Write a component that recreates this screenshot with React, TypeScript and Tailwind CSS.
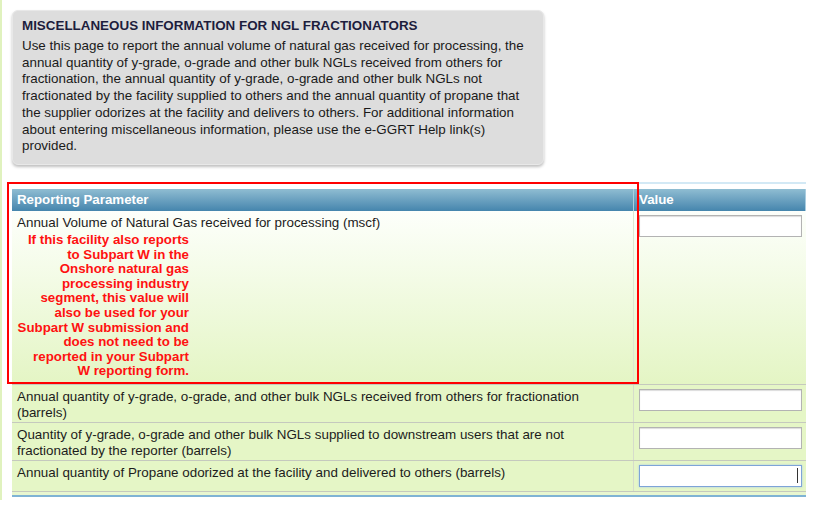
import React from 'react';

const rows = [
  {
    label: 'Annual quantity of y-grade, o-grade, and other bulk NGLs received from others for fractionation (barrels)',
    height: 'h-[38px]',
  },
  {
    label: 'Quantity of y-grade, o-grade and other bulk NGLs supplied to downstream users that are not fractionated by the reporter (barrels)',
    height: 'h-[38px]',
  },
  {
    label: 'Annual quantity of Propane odorized at the facility and delivered to others (barrels)',
    height: 'h-[31px]',
    focused: true,
  },
];

function ValueInput({ focused }: { focused?: boolean }) {
  return (
    <div className="relative ml-[5px] mt-[3px] w-[163px] h-[22px]">
      <input
        readOnly
        className={`w-full h-full bg-white outline-none ${
          focused
            ? 'border border-[#7ea4d8] shadow-[0_0_2px_#a9c6ee]'
            : 'border border-[#b3b3b3] shadow-[inset_0_1px_1px_#dcdcdc]'
        }`}
      />
      {focused && <span className="absolute right-[4px] top-[4px] w-px h-[15px] bg-[#333]"></span>}
    </div>
  );
}

export default function App() {
  return (
    <div className="relative w-[816px] h-[508px] bg-white font-['Liberation_Sans',Arial,sans-serif] text-[#1c1c1c] overflow-hidden">
      <div className="h-[500px] border-l-2 border-[#e0f2be] pt-[10px] pl-[10px] pr-[10px]">
        {/* Info box */}
        <div className="w-[532px] h-[155px] rounded-[6px] bg-[#dddddd] border border-[#e8e8e8] shadow-[0_2px_3px_rgba(0,0,0,0.25)] pl-[9px] pr-[12px] pt-[6px]">
          <h2 className="font-bold text-[13.4px] leading-[18px] text-[#1d1d3d] uppercase">
            Miscellaneous Information for NGL Fractionators
          </h2>
          <p className="mt-[3px] text-[13.4px] leading-[16.7px] text-[#1a1a1a]">
            Use this page to report the annual volume of natural gas received for processing, the annual quantity of
            y-grade, o-grade and other bulk NGLs received from others for fractionation, the annual quantity of y-grade,
            o-grade and other bulk NGLs not fractionated by the facility supplied to others and the annual quantity of
            propane that the supplier odorizes at the facility and delivers to others. For additional information about
            entering miscellaneous information, please use the e-GGRT Help link(s) provided.
          </p>
        </div>

        {/* Table */}
        <div className="mt-[17px] w-[794px] border-t-2 border-[#d3e9f5] pt-[5px]">
          <div className="flex h-[22px] bg-gradient-to-b from-[#8fbdd2] to-[#4585ad] text-white font-bold text-[13.3px] leading-[22px]">
            <div className="w-[622px] pl-[5px] border-r border-[#a9cde0]">Reporting Parameter</div>
            <div className="flex-1 pl-[5px] border-r border-[#a9cde0]">Value</div>
          </div>

          <div className="flex h-[174px] bg-gradient-to-b from-[#fdfffb] to-[#e4f5c4] border-b border-[#c5c9be]">
            <div className="w-[622px] pl-[5px] pt-[4px] border-r border-[#dfe6d3]">
              <div className="text-[13.4px] leading-[16px]">Annual Volume of Natural Gas received for processing (mscf)</div>
              <div className="w-[172px] text-right font-bold text-[13.3px] leading-[14.6px] text-[#ff1111] mt-[2px]">
                If this facility also reports to Subpart W in the Onshore natural gas processing industry segment, this
                value will also be used for your Subpart W submission and does not need to be reported in your Subpart W
                reporting form.
              </div>
            </div>
            <div className="flex-1">
              <ValueInput />
            </div>
          </div>

          {rows.map((r) => (
            <div key={r.label} className={`flex ${r.height} bg-[#e5f6c6] border-b border-[#c5c9be]`}>
              <div className="w-[622px] pl-[5px] pr-[40px] pt-[4px] text-[13.4px] leading-[16px] border-r border-[#d6dccb]">
                {r.label}
              </div>
              <div className="flex-1">
                <ValueInput focused={r.focused} />
              </div>
            </div>
          ))}

          <div className="h-[5px] bg-[#e8f6cf] border-b-2 border-[#7fb3d4]"></div>
        </div>
      </div>

      {/* highlight annotation */}
      <div className="absolute left-[7px] top-[182px] w-[632px] h-[202px] border-2 border-[#ff0000] pointer-events-none"></div>
    </div>
  );
}
